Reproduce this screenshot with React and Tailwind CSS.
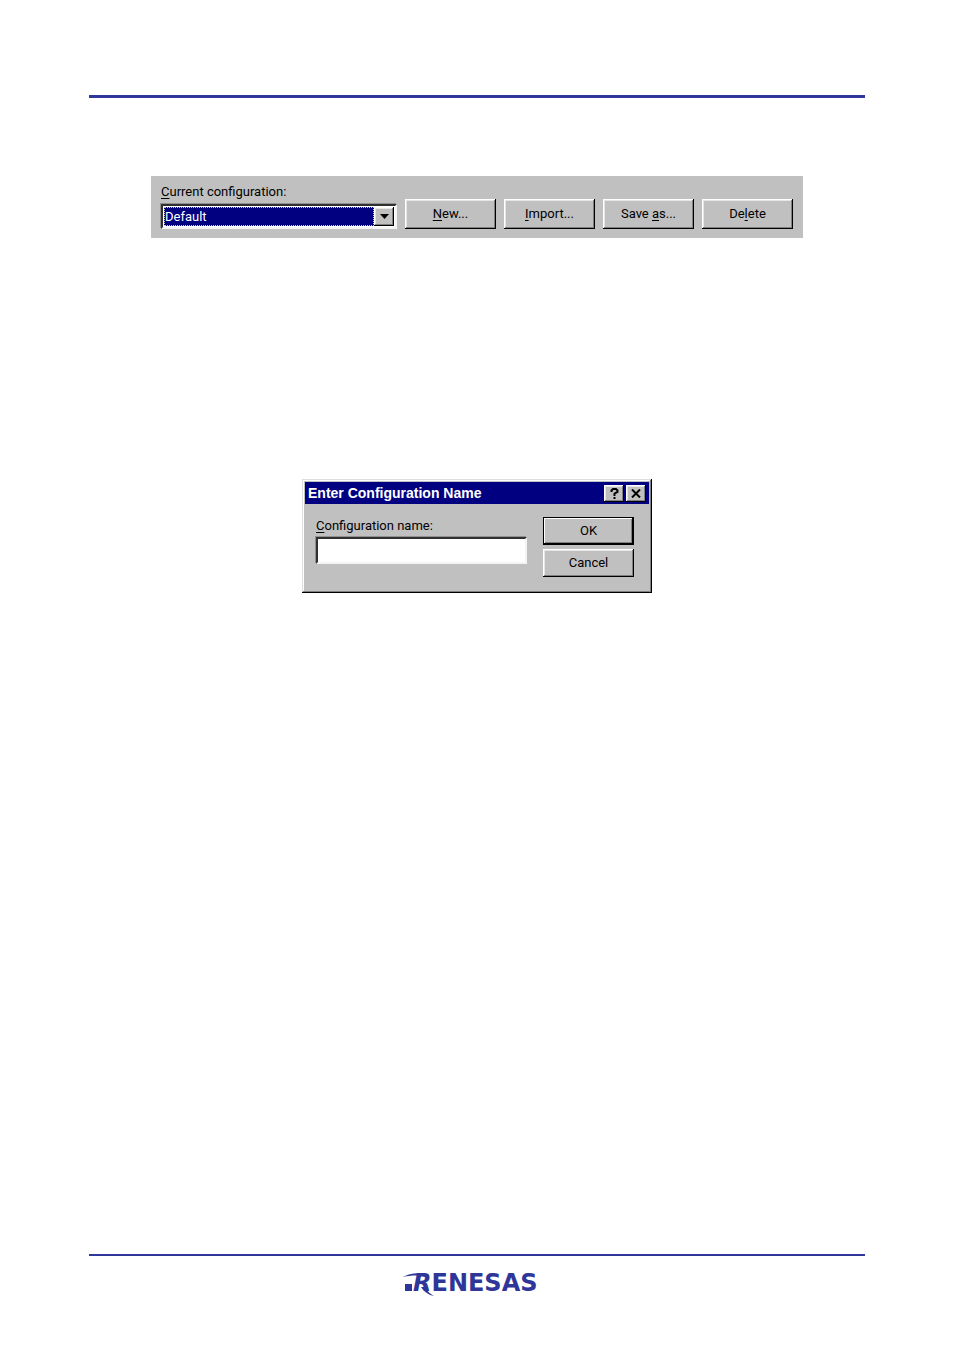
import clsx from "clsx";

const RAISED = "shadow-[inset_-1px_-1px_0_#000,inset_1px_1px_0_#fff,inset_-2px_-2px_0_#808080,inset_2px_2px_0_#e6e6e6]";
const SUNKEN = "border-2 border-t-[#303030] border-l-[#303030] border-r-[#f4f4f4] border-b-[#f4f4f4] shadow-[-1px_-1px_0_#909090]";

const ACTIONS = [
    { before: "", key: "N", after: "ew..." },
    { before: "", key: "I", after: "mport..." },
    { before: "Save ", key: "a", after: "s..." },
    { before: "De", key: "l", after: "ete" },
];

function PushButton({ className, children }) {
    return (
        <button type="button" className={clsx("bg-[#c0c0c0] text-[13px] leading-4 text-black", className)}>
            {children}
        </button>
    );
}

function ConfigToolbar() {
    return (
        <section className="flex w-full max-w-[652px] items-end gap-2 self-center bg-[#c0c0c0] px-[10px] pt-2 pb-[9px]">
            <div className="flex min-w-0 flex-1 flex-col">
                <label htmlFor="current-config" className="mb-1 text-[13px] leading-4">
                    <u className="underline-offset-2">C</u>urrent configuration:
                </label>
                <div className={clsx("flex h-[25px] bg-white p-px", SUNKEN)}>
                    <select
                        id="current-config"
                        className="min-w-0 flex-1 appearance-none border border-dotted border-[#d0d0a0] bg-[#000080] text-[13px] leading-4 text-white outline-none"
                    >
                        <option>Default</option>
                    </select>
                    <span className={clsx("flex w-5 shrink-0 items-center justify-center bg-[#c0c0c0]", RAISED)}>
                        <svg width="9" height="5" viewBox="0 0 9 5" aria-hidden="true">
                            <path d="M0 0h9L4.5 5z" fill="#000" />
                        </svg>
                    </span>
                </div>
            </div>
            {ACTIONS.map((a) => (
                <PushButton key={a.key} className={clsx("h-[30px] w-[91px]", RAISED)}>
                    {a.before}<u className="underline-offset-2">{a.key}</u>{a.after}
                </PushButton>
            ))}
        </section>
    );
}

function TitleButton({ label, children }) {
    return (
        <button type="button" aria-label={label} className={clsx("flex h-[17px] w-5 items-center justify-center bg-[#c0c0c0]", RAISED)}>
            {children}
        </button>
    );
}

function NameDialog() {
    return (
        <section
            role="dialog"
            aria-labelledby="dialog-title"
            className="w-full max-w-[350px] self-center bg-[#c0c0c0] p-[3px] pb-4 shadow-[inset_-1px_-1px_0_#000,inset_1px_1px_0_#dfdfdf,inset_-2px_-2px_0_#808080,inset_2px_2px_0_#fff]"
        >
            <header className="flex h-[22px] items-center bg-[#000080] px-[3px] text-white">
                <h2 id="dialog-title" className="flex-1 font-['Liberation_Sans',sans-serif] text-sm leading-4 font-bold">
                    Enter Configuration Name
                </h2>
                <div className="flex gap-[2px]">
                    <TitleButton label="Help">
                        <svg width="9" height="11" viewBox="0 0 9 11" fill="none" stroke="#000" strokeWidth="2" aria-hidden="true">
                            <path d="M1.5 4V2.5L3 1h3l1.5 1.5V4L4.5 5.5V8M4.5 9v2" />
                        </svg>
                    </TitleButton>
                    <TitleButton label="Close">
                        <svg width="10" height="9" viewBox="0 0 10 9" fill="none" stroke="#000" strokeWidth="2" aria-hidden="true">
                            <path d="M1 .5l8 8M9 .5l-8 8" />
                        </svg>
                    </TitleButton>
                </div>
            </header>
            <form className="flex gap-4 pt-[13px] pr-[15px] pl-[11px]">
                <div className="flex min-w-0 flex-1 flex-col pt-px">
                    <label htmlFor="config-name" className="mb-[3px] text-[13px] leading-4">
                        <u className="underline-offset-2">C</u>onfiguration name:
                    </label>
                    <input
                        id="config-name"
                        type="text"
                        className={clsx("h-[27px] w-full bg-white px-1 text-[13px] outline-none", SUNKEN)}
                    />
                </div>
                <div className="flex w-[91px] flex-col gap-1">
                    <PushButton className="h-7 border border-black shadow-[inset_-1px_-1px_0_#000,inset_1px_1px_0_#fff,inset_-2px_-2px_0_#808080]">
                        OK
                    </PushButton>
                    <PushButton className={clsx("h-7", RAISED)}>Cancel</PushButton>
                </div>
            </form>
        </section>
    );
}

function Logo() {
    return (
        <div className="relative flex w-[148px] pl-[10px] text-[#2f3699]">
            {/* square and swoosh that run into the first letter */}
            <svg className="absolute top-0 left-0" width="32" height="26" viewBox="0 0 32 26" fill="currentColor" aria-hidden="true">
                <rect x="2" y="11" width="7" height="7" />
                <path d="M0 4C6 0 19 -1 26 2L24 4C18 2 8 2 0 4Z" />
                <path d="M22 14C24 18 27 21 31 23C26 22 21 19 18 14Z" />
            </svg>
            <span className="font-['DejaVu_Sans',sans-serif] text-2xl leading-5 font-bold">
                <i>R</i>ENESAS
            </span>
        </div>
    );
}

export default function App() {
    return (
        <main className="flex min-h-screen flex-col bg-white px-[89px] pt-[95px] pb-[58px] font-[Roboto,'Liberation_Sans',sans-serif] text-black">
            <hr className="mb-[78px] border-0 border-t-[3px] border-[#30379b]" />
            <ConfigToolbar />
            <div className="h-[241px]" />
            <NameDialog />
            <footer className="mt-auto flex flex-col items-center border-t-2 border-[#30379b] pt-[17px]">
                <Logo />
            </footer>
        </main>
    );
}
